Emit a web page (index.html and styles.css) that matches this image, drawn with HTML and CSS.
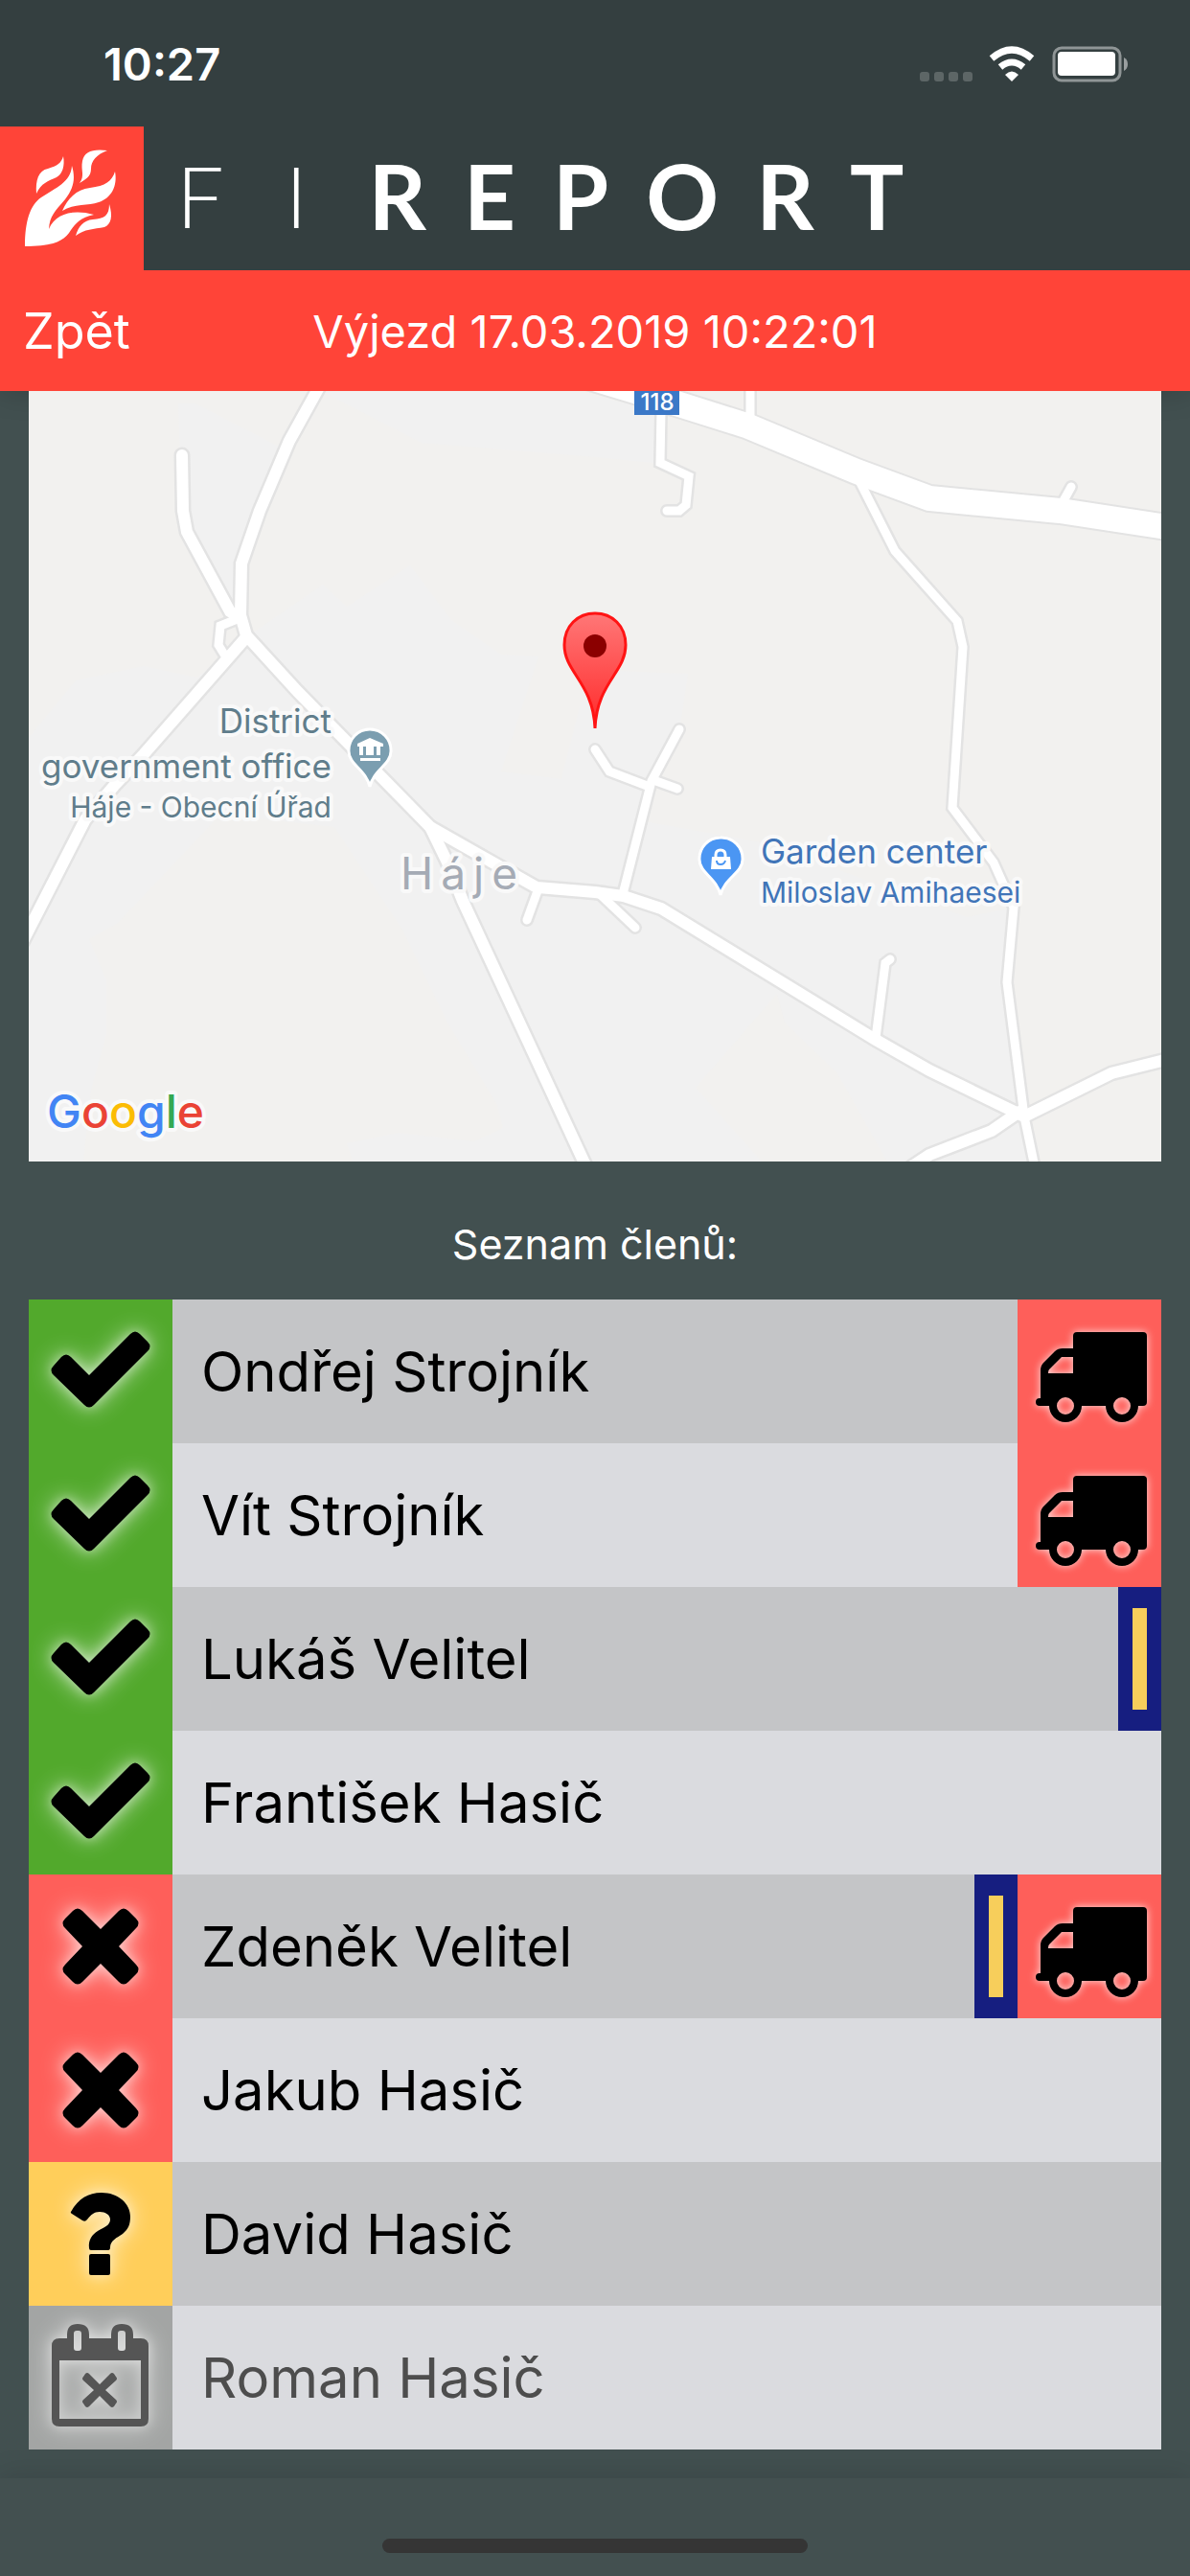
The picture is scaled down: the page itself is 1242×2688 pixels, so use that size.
FILE: index.html
```
<!DOCTYPE html>
<html lang="cs">
<head>
    <meta charset="UTF-8">
    <meta name="viewport" content="width=device-width, initial-scale=1.0">
    <title>FIREPORT - Výjezd</title>
    <link rel="stylesheet" href="styles.css">
</head>
<body>
    <!-- Shared icons -->
    <svg class="sprite" aria-hidden="true">
        <symbol id="icon-check" viewBox="0 0 150 150">
            <path d="M63 79L106 36Q111 31 116 36L124 44Q129 49 124 54L68 110Q63 115 58 110L26 79Q21 74 26 69L34 60Q39 55 44 60Z"/>
        </symbol>
        <symbol id="icon-cross" viewBox="0 0 150 150">
            <path d="M75 57L94 38Q99 33 104 38L112 46Q117 51 112 56L94 75L112 94Q117 99 112 104L104 112Q99 117 94 112L75 93L56 112Q51 117 46 112L38 104Q33 99 38 94L56 75L38 56Q33 51 38 46L46 38Q51 33 56 38Z"/>
        </symbol>
        <symbol id="icon-question" viewBox="0 0 150 150">
            <path d="M44 52C52 38 62 32 76 32C93 32 106 43 106 57C106 65 104 70 98 75C92 79 85 82 85 89Q85 92 83 92H65Q63 92 63 90C62 81 66 76 72 72C79 68 85 66 85 60C85 55 80 52 74 52C68 52 65 55 61 60Q59 63 56 61L45 54Q43 53 44 52ZM65 96H83Q85 96 85 98V116Q85 118 83 118H65Q63 118 63 116V98Q63 96 65 96Z"/>
        </symbol>
        <symbol id="icon-calendar" viewBox="0 0 150 150">
            <path fill-rule="evenodd" d="M32 34H40V30Q40 19 51 19Q63 19 63 30V34H86V30Q86 19 97 19Q109 19 109 30V34H117Q125 34 125 42V118Q125 126 117 126H32Q24 126 24 118V42Q24 34 32 34ZM32 57V118H117V57ZM50 26Q47 26 47 29V44Q47 47 50 47H52Q55 47 55 44V29Q55 26 52 26ZM96 26Q93 26 93 29V44Q93 47 96 47H98Q101 47 101 44V29Q101 26 98 26Z"/>
            <path d="M74 82L85 71Q87 69 89 71L91 74Q93 76 91 78L80 88L91 98Q93 100 91 102L89 105Q87 107 85 105L74 94L63 105Q61 107 59 105L57 102Q55 100 57 98L68 88L57 78Q55 76 57 74L59 71Q61 69 63 71Z"/>
        </symbol>
        <symbol id="icon-truck" viewBox="0 0 150 150">
            <path fill-rule="evenodd" d="M62 34H131Q135 34 135 38V107Q135 111 131 111H126A17 17 0 0 1 92 111H67A17 17 0 0 1 33 111H23Q19 111 19 107T23 103H24V74Q24 69 27 66L39 54Q42 51 47 51H58V38Q58 34 62 34ZM46 60L33 73Q32 74 32 77H58V60ZM41 111a9 9 0 1 0 18 0a9 9 0 1 0 -18 0ZM100 111a9 9 0 1 0 18 0a9 9 0 1 0 -18 0Z"/>
        </symbol>
    </svg>

    <header class="header">
        <div class="status-bar">
            <span class="time">10:27</span>
            <svg class="status-icons" viewBox="0 0 220 40" aria-hidden="true">
                <g fill="#fff" opacity="0.2">
                    <rect x="0" y="28" width="10" height="10" rx="3"/>
                    <rect x="15" y="28" width="10" height="10" rx="3"/>
                    <rect x="30" y="28" width="10" height="10" rx="3"/>
                    <rect x="45" y="28" width="10" height="10" rx="3"/>
                </g>
                <g fill="none" stroke="#fff">
                    <path stroke-width="7" d="M75 14Q96 -4 117 14"/>
                    <path stroke-width="7" d="M84 23Q96 13 108 23"/>
                </g>
                <path fill="#fff" d="M89 31Q96 24 103 31L96 38Z"/>
                <rect x="140" y="3" width="69" height="34" rx="8" fill="none" stroke="#fff" stroke-opacity="0.45" stroke-width="3"/>
                <rect x="144" y="7" width="60" height="25" rx="4" fill="#fff"/>
                <path fill="#fff" opacity="0.5" d="M213 13Q217 15 217 20T213 27Z"/>
            </svg>
        </div>
        <div class="brand">
            <svg class="brand-logo" viewBox="0 0 150 150" aria-hidden="true">
                <g fill="#fff">
                    <path d="M26 125C26 100 31 82 43 74C58 64 74 58 75 41C79 54 77 64 68 76C57 89 52 93 51 107C58 91 76 86 98 92C84 95 79 101 74 108C67 120 55 125 26 125Z"/>
                    <path d="M38 70C37 56 40 46 50 44C60 41 64 38 66 31C68 41 65 50 59 53C50 57 43 59 38 70Z"/>
                    <path d="M83 59C89 51 84 46 86 36C88 26 97 23 112 25C101 29 95 36 95 44C95 52 90 55 83 59Z"/>
                    <path d="M65 88C71 75 79 66 94 64C110 62 117 57 120 47C123 62 116 75 103 79C92 83 78 80 65 88Z"/>
                    <path d="M79 114C82 104 87 98 97 97C109 96 114 93 114 81C118 94 116 102 109 105C98 107 88 107 79 114Z"/>
                </g>
            </svg>
            <h1 class="brand-name"><span class="thin">FI</span><span class="bold">REPORT</span></h1>
        </div>
        <nav class="toolbar">
            <button type="button" class="back">Zpět</button>
            <h2 class="toolbar-title">Výjezd 17.03.2019 10:22:01</h2>
        </nav>
    </header>

    <main class="content">
        <svg class="map" viewBox="30 408 1182 804" role="img" aria-label="Mapa výjezdu">
            <defs>
                <linearGradient id="pin-red" x1="0" y1="0" x2="0" y2="1">
                    <stop offset="0" stop-color="#ff7777"/>
                    <stop offset="1" stop-color="#ff2a2a"/>
                </linearGradient>
                <g id="roads">
                    <path d="M333 404L302 460L271 533L252 588L251 642L257 663L311 722L404 817L449 863"/>
                    <path d="M190 475L191 533L195 555L240 638L251 645"/>
                    <path d="M257 665L150 787L119 820L89 855L24 982"/>
                    <path d="M449 863L467 900L483 940L562 1110L612 1218"/>
                    <path d="M449 863L560 926L621 931L651 935L690 948L914 1085L970 1117L1069 1165"/>
                    <path d="M1069 1165L1160 1120L1216 1106"/>
                    <path d="M1064 1160L1035 1180L970 1205L952 1217"/>
                </g>
                <g id="lanes">
                    <path d="M250 645L230 653L228 673L236 686"/>
                    <path d="M562 927L550 960"/>
                    <path d="M625 932L663 968"/>
                    <path d="M650 933L680 815L709 761"/>
                    <path d="M621 782L636 805L678 821"/>
                    <path d="M682 814L707 823"/>
                    <path d="M914 1083L924 1005L929 1001"/>
                    <path d="M783 404V438"/>
                    <path d="M1108 526L1118 508"/>
                    <path d="M690 428L689 483L719 497L716 527L709 533H696"/>
                    <path d="M896 500L934 575L999 648L1005 675L994 843L1037 900L1058 947L1051 1025L1069 1165L1080 1218"/>
                </g>
                <path id="highway" d="M590 386L709 422L779 444L894 492L970 520L1106 533L1218 550"/>
            </defs>
            <rect x="30" y="408" width="1182" height="804" fill="#f2f1ef"/>
            <g fill="#f1f1f1">
                <path d="M186 421H204L293 467L277 517L253 587L250 640L190 533Z"/>
                <path d="M335 408L440 462L621 477L682 483L690 430L600 408Z"/>
                <path d="M257 665L337 610L362 633L428 590L471 647L523 683L562 685L523 805L586 813L606 733L645 700L718 703L710 757L680 815L672 857L800 880L1009 957L1058 947L1051 1025L1069 1165L1080 1212H926L874 1120L819 1067L811 1037L726 1135L795 1212H368L362 1193L416 1182L495 1191L525 1177L519 1153L467 1067L420 970L349 863L230 850L123 963L93 980L111 1023V1080L95 1137L87 1212H30V770L79 710L150 695L206 707Z"/>
            </g>
            <g fill="none" stroke="#e3e3e3" stroke-linecap="round">
                <use href="#roads" stroke-width="17"/>
                <use href="#lanes" stroke-width="14"/>
                <use href="#highway" stroke-width="30"/>
            </g>
            <g fill="none" stroke="#fff" stroke-linecap="round">
                <use href="#roads" stroke-width="12"/>
                <use href="#lanes" stroke-width="9"/>
                <use href="#highway" stroke-width="26"/>
            </g>

            <rect x="662" y="400" width="47" height="33" fill="#3b78c7"/>
            <text class="map-shield" x="686" y="428">118</text>

            <!-- District office -->
            <g stroke="#fff" stroke-width="3">
                <path fill="#7b9eb0" d="M386 761A22 22 0 0 1 408 784C408 798 390 803 386 821C382 803 364 798 364 784A22 22 0 0 1 386 761Z"/>
            </g>
            <path fill="#fff" d="M373 776L386 770L400 776V779H397V788H375V779H373ZM379 779V788H382V779ZM390 779V788H393V779ZM376 791H397V794H376Z"/>
            <text class="map-poi office" x="346" y="765">District</text>
            <text class="map-poi office" x="346" y="812">government office</text>
            <text class="map-poi office small" x="346" y="853">Háje - Obecní Úřad</text>

            <!-- Garden center -->
            <g stroke="#fff" stroke-width="3">
                <path fill="#4b96f3" d="M752 874A22 22 0 0 1 775 897C775 911 756 916 752 934C748 916 730 911 730 897A22 22 0 0 1 752 874Z"/>
            </g>
            <path fill="#fff" d="M743 894H762L763 907H742Z"/>
            <path fill="none" stroke="#fff" stroke-width="3" d="M747 895V892Q747 887 752 887T757 892V895"/>
            <path fill="none" stroke="#4b96f3" stroke-width="2" d="M748 898Q748 902 752 902T757 898"/>
            <text class="map-poi garden" x="794" y="901">Garden center</text>
            <text class="map-poi garden small" x="794" y="942">Miloslav Amihaesei</text>

            <text class="map-place" x="418" y="928">Háje</text>

            <path fill="url(#pin-red)" stroke="#ff1414" stroke-width="3" d="M621 760C619 712 589 702 589 673C589 653 603 640 621 640S653 653 653 673C653 702 623 712 621 760Z"/>
            <circle cx="621" cy="674" r="12" fill="#8b0000"/>

            <text class="map-google" x="49" y="1177"><tspan fill="#4285f4">G</tspan><tspan fill="#ea4335">o</tspan><tspan fill="#fbbc05">o</tspan><tspan fill="#4285f4">g</tspan><tspan fill="#34a853">l</tspan><tspan fill="#ea4335">e</tspan></text>
        </svg>

        <h3 class="list-title">Seznam členů:</h3>

        <ul class="members">
            <li class="member">
                <svg class="state yes"><use href="#icon-check"/></svg>
                <span class="name">Ondřej Strojník</span>
                <svg class="driver"><use href="#icon-truck"/></svg>
            </li>
            <li class="member">
                <svg class="state yes"><use href="#icon-check"/></svg>
                <span class="name">Vít Strojník</span>
                <svg class="driver"><use href="#icon-truck"/></svg>
            </li>
            <li class="member">
                <svg class="state yes"><use href="#icon-check"/></svg>
                <span class="name">Lukáš Velitel</span>
                <span class="rank"></span>
            </li>
            <li class="member">
                <svg class="state yes"><use href="#icon-check"/></svg>
                <span class="name">František Hasič</span>
            </li>
            <li class="member">
                <svg class="state no"><use href="#icon-cross"/></svg>
                <span class="name">Zdeněk Velitel</span>
                <span class="rank"></span>
                <svg class="driver"><use href="#icon-truck"/></svg>
            </li>
            <li class="member">
                <svg class="state no"><use href="#icon-cross"/></svg>
                <span class="name">Jakub Hasič</span>
            </li>
            <li class="member">
                <svg class="state unknown"><use href="#icon-question"/></svg>
                <span class="name">David Hasič</span>
            </li>
            <li class="member away">
                <svg class="state"><use href="#icon-calendar"/></svg>
                <span class="name">Roman Hasič</span>
            </li>
        </ul>
    </main>

    <footer class="footer">
        <div class="home-indicator"></div>
    </footer>
</body>
</html>
```
FILE: styles.css
```
* {
    margin: 0;
    padding: 0;
    box-sizing: border-box;
}

body {
    display: flex;
    flex-direction: column;
    min-height: 100vh;
    background: #425050;
    color: #fff;
    font-family: Inter, 'Liberation Sans', sans-serif;
}

.sprite {
    position: absolute;
    width: 0;
    height: 0;
}

/* Header */
.header {
    background: #343f40;
    box-shadow: 0 0 30px rgba(0, 0, 0, 0.2);
}

.status-bar {
    display: flex;
    justify-content: space-between;
    align-items: center;
    height: 132px;
    padding: 2px 62px 0 108px;
}

.time {
    font-size: 47px;
    font-weight: 600;
    line-height: 130px;
}

.status-icons {
    width: 220px;
    height: 40px;
}

.brand {
    display: flex;
    align-items: center;
    height: 150px;
}

.brand-logo {
    width: 150px;
    height: 150px;
    background: #ff4438;
}

.brand-name {
    display: flex;
    align-items: center;
    padding-left: 34px;
    font-family: Lato, sans-serif;
    line-height: 144px;
    padding-bottom: 6px;
}

.thin {
    font-size: 88px;
    font-weight: 300;
    letter-spacing: 64px;
}

.bold {
    font-size: 94px;
    font-weight: 700;
    letter-spacing: 39px;
}

.toolbar {
    display: grid;
    grid-template-columns: 1fr auto 1fr;
    align-items: center;
    height: 126px;
    padding: 0 24px;
    background: #ff4438;
}

.back {
    justify-self: start;
    border: none;
    background: none;
    color: #fff;
    font-family: inherit;
    font-size: 52px;
    cursor: pointer;
}

.toolbar-title {
    font-size: 47px;
    font-weight: 400;
}

/* Content */
.content {
    padding: 0 30px 30px;
}

.map {
    display: block;
    width: 100%;
}

.map text {
    paint-order: stroke;
    stroke: #f9f9f9;
    stroke-width: 8px;
    stroke-linejoin: round;
}

.map .map-shield {
    fill: #fff;
    stroke: none;
    font-size: 24px;
    font-weight: 500;
    text-anchor: middle;
}

.map-poi {
    font-size: 35px;
}

.map-poi.small {
    font-size: 30px;
}

.map-poi.office {
    fill: #607d8b;
    text-anchor: end;
}

.map-poi.garden {
    fill: #4175b8;
}

.map-place {
    fill: #a5abb5;
    font-size: 46px;
    letter-spacing: 8px;
}

.map-google {
    font-size: 48px;
    font-weight: 500;
}

.list-title {
    padding-top: 28px;
    font-size: 43px;
    font-weight: 400;
    line-height: 116px;
    text-align: center;
}

.members {
    list-style: none;
}

.member {
    display: flex;
    height: 150px;
    background: #dadbdf;
    color: #000;
}

.member:nth-child(odd) {
    background: #c4c5c7;
}

.name {
    flex: 1;
    padding-left: 30px;
    font-size: 58px;
    line-height: 150px;
}

.state,
.driver {
    flex: none;
    width: 150px;
    height: 150px;
}

.state use {
    filter: drop-shadow(0 0 6px rgba(255, 255, 255, 0.4)) drop-shadow(0 0 12px rgba(255, 255, 255, 0.6));
}

.driver use {
    filter: drop-shadow(0 0 4px rgba(255, 255, 255, 0.8));
}

.yes {
    background: #52a92c;
}

.no,
.driver {
    background: #fe5f5a;
}

.unknown {
    background: #ffce5a;
}

.away {
    color: #4d4d4d;
}

.away .state {
    background: #a3a5a4;
    fill: #555;
}

.rank {
    flex: none;
    width: 45px;
    padding: 22px 15px;
    background: #161e80;
}

.rank::before {
    content: '';
    display: block;
    height: 100%;
    background: #f7ce5b;
}

/* Footer */
.footer {
    flex: 1;
    display: flex;
    justify-content: center;
    align-items: flex-end;
    padding: 63px 0 24px;
    background: #435050;
    box-shadow: 0 0 30px rgba(0, 0, 0, 0.15);
}

.home-indicator {
    width: 444px;
    height: 15px;
    border-radius: 8px;
    background: #353535;
}
```
